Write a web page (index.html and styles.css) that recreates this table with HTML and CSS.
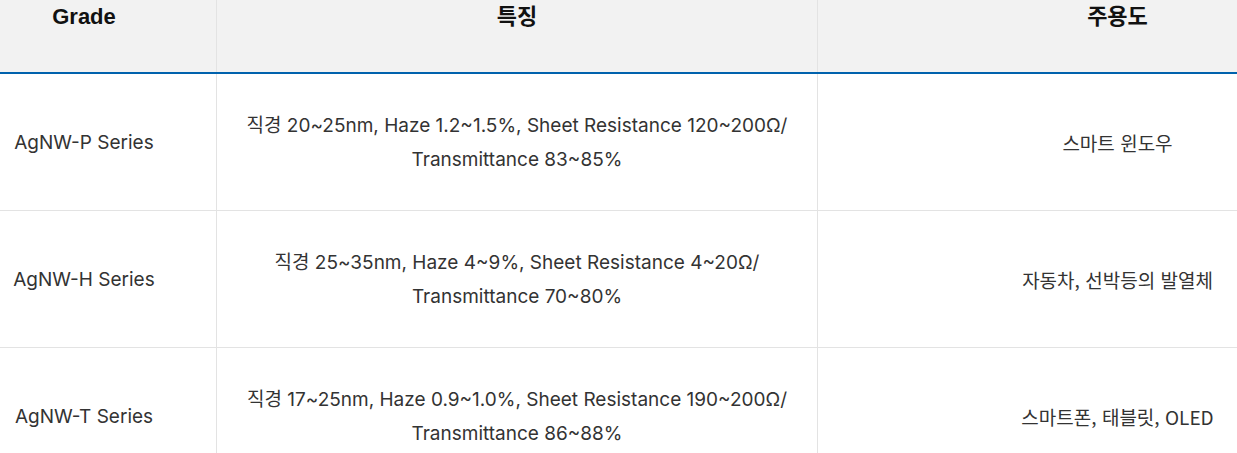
FILE: index.html
```html
<!DOCTYPE html>
<html lang="ko">
<head>
<meta charset="utf-8">
<title>AgNW Grade</title>
<link rel="stylesheet" href="styles.css">
</head>
<body>
<div class="frame">
  <table class="spec">
    <colgroup>
      <col class="c-grade">
      <col class="c-feat">
      <col class="c-use">
    </colgroup>
    <thead>
      <tr>
        <th>Grade</th>
        <th>특징</th>
        <th>주용도</th>
      </tr>
    </thead>
    <tbody>
      <tr>
        <td class="grade">AgNW-P Series</td>
        <td class="feat">직경 20~25nm, Haze 1.2~1.5%, Sheet Resistance 120~200Ω/<br>Transmittance 83~85%</td>
        <td class="use">스마트 윈도우</td>
      </tr>
      <tr>
        <td class="grade">AgNW-H Series</td>
        <td class="feat">직경 25~35nm, Haze 4~9%, Sheet Resistance 4~20Ω/<br>Transmittance 70~80%</td>
        <td class="use">자동차, 선박등의 발열체</td>
      </tr>
      <tr>
        <td class="grade">AgNW-T Series</td>
        <td class="feat">직경 17~25nm, Haze 0.9~1.0%, Sheet Resistance 190~200Ω/<br>Transmittance 86~88%</td>
        <td class="use">스마트폰, 태블릿, OLED</td>
      </tr>
    </tbody>
  </table>
</div>
</body>
</html>
```

FILE: styles.css
```css
html, body {
  margin: 0;
  padding: 0;
  background: #ffffff;
}

.frame {
  width: 1237px;
  height: 453px;
  overflow: hidden;
}

.spec {
  margin-left: -49px;
  width: 1466px;
  border-collapse: collapse;
  table-layout: fixed;
}

.c-grade { width: 265px; }
.c-feat { width: 601px; }
.c-use { width: 600px; }

.spec th {
  height: 72px;
  padding: 0;
  vertical-align: top;
  background: #f2f2f2;
  color: #111111;
  font-family: "Liberation Sans", Arial, "Noto Sans CJK KR", sans-serif;
  font-weight: 700;
  font-size: 22px;
  line-height: 34px;
  text-align: center;
  border-left: 1px solid #e3e3e3;
  border-right: 1px solid #e3e3e3;
  border-bottom: 2px solid #0062ad;
}

.spec td {
  height: 134px;
  padding: 2px 0 0;
  vertical-align: middle;
  text-align: center;
  color: #333333;
  font-family: Inter, "Noto Sans CJK KR", sans-serif;
  font-size: 19px;
  line-height: 34px;
  border: 1px solid #e3e3e3;
}

.spec td.use {
  font-family: "Noto Sans CJK KR", sans-serif;
}
```
